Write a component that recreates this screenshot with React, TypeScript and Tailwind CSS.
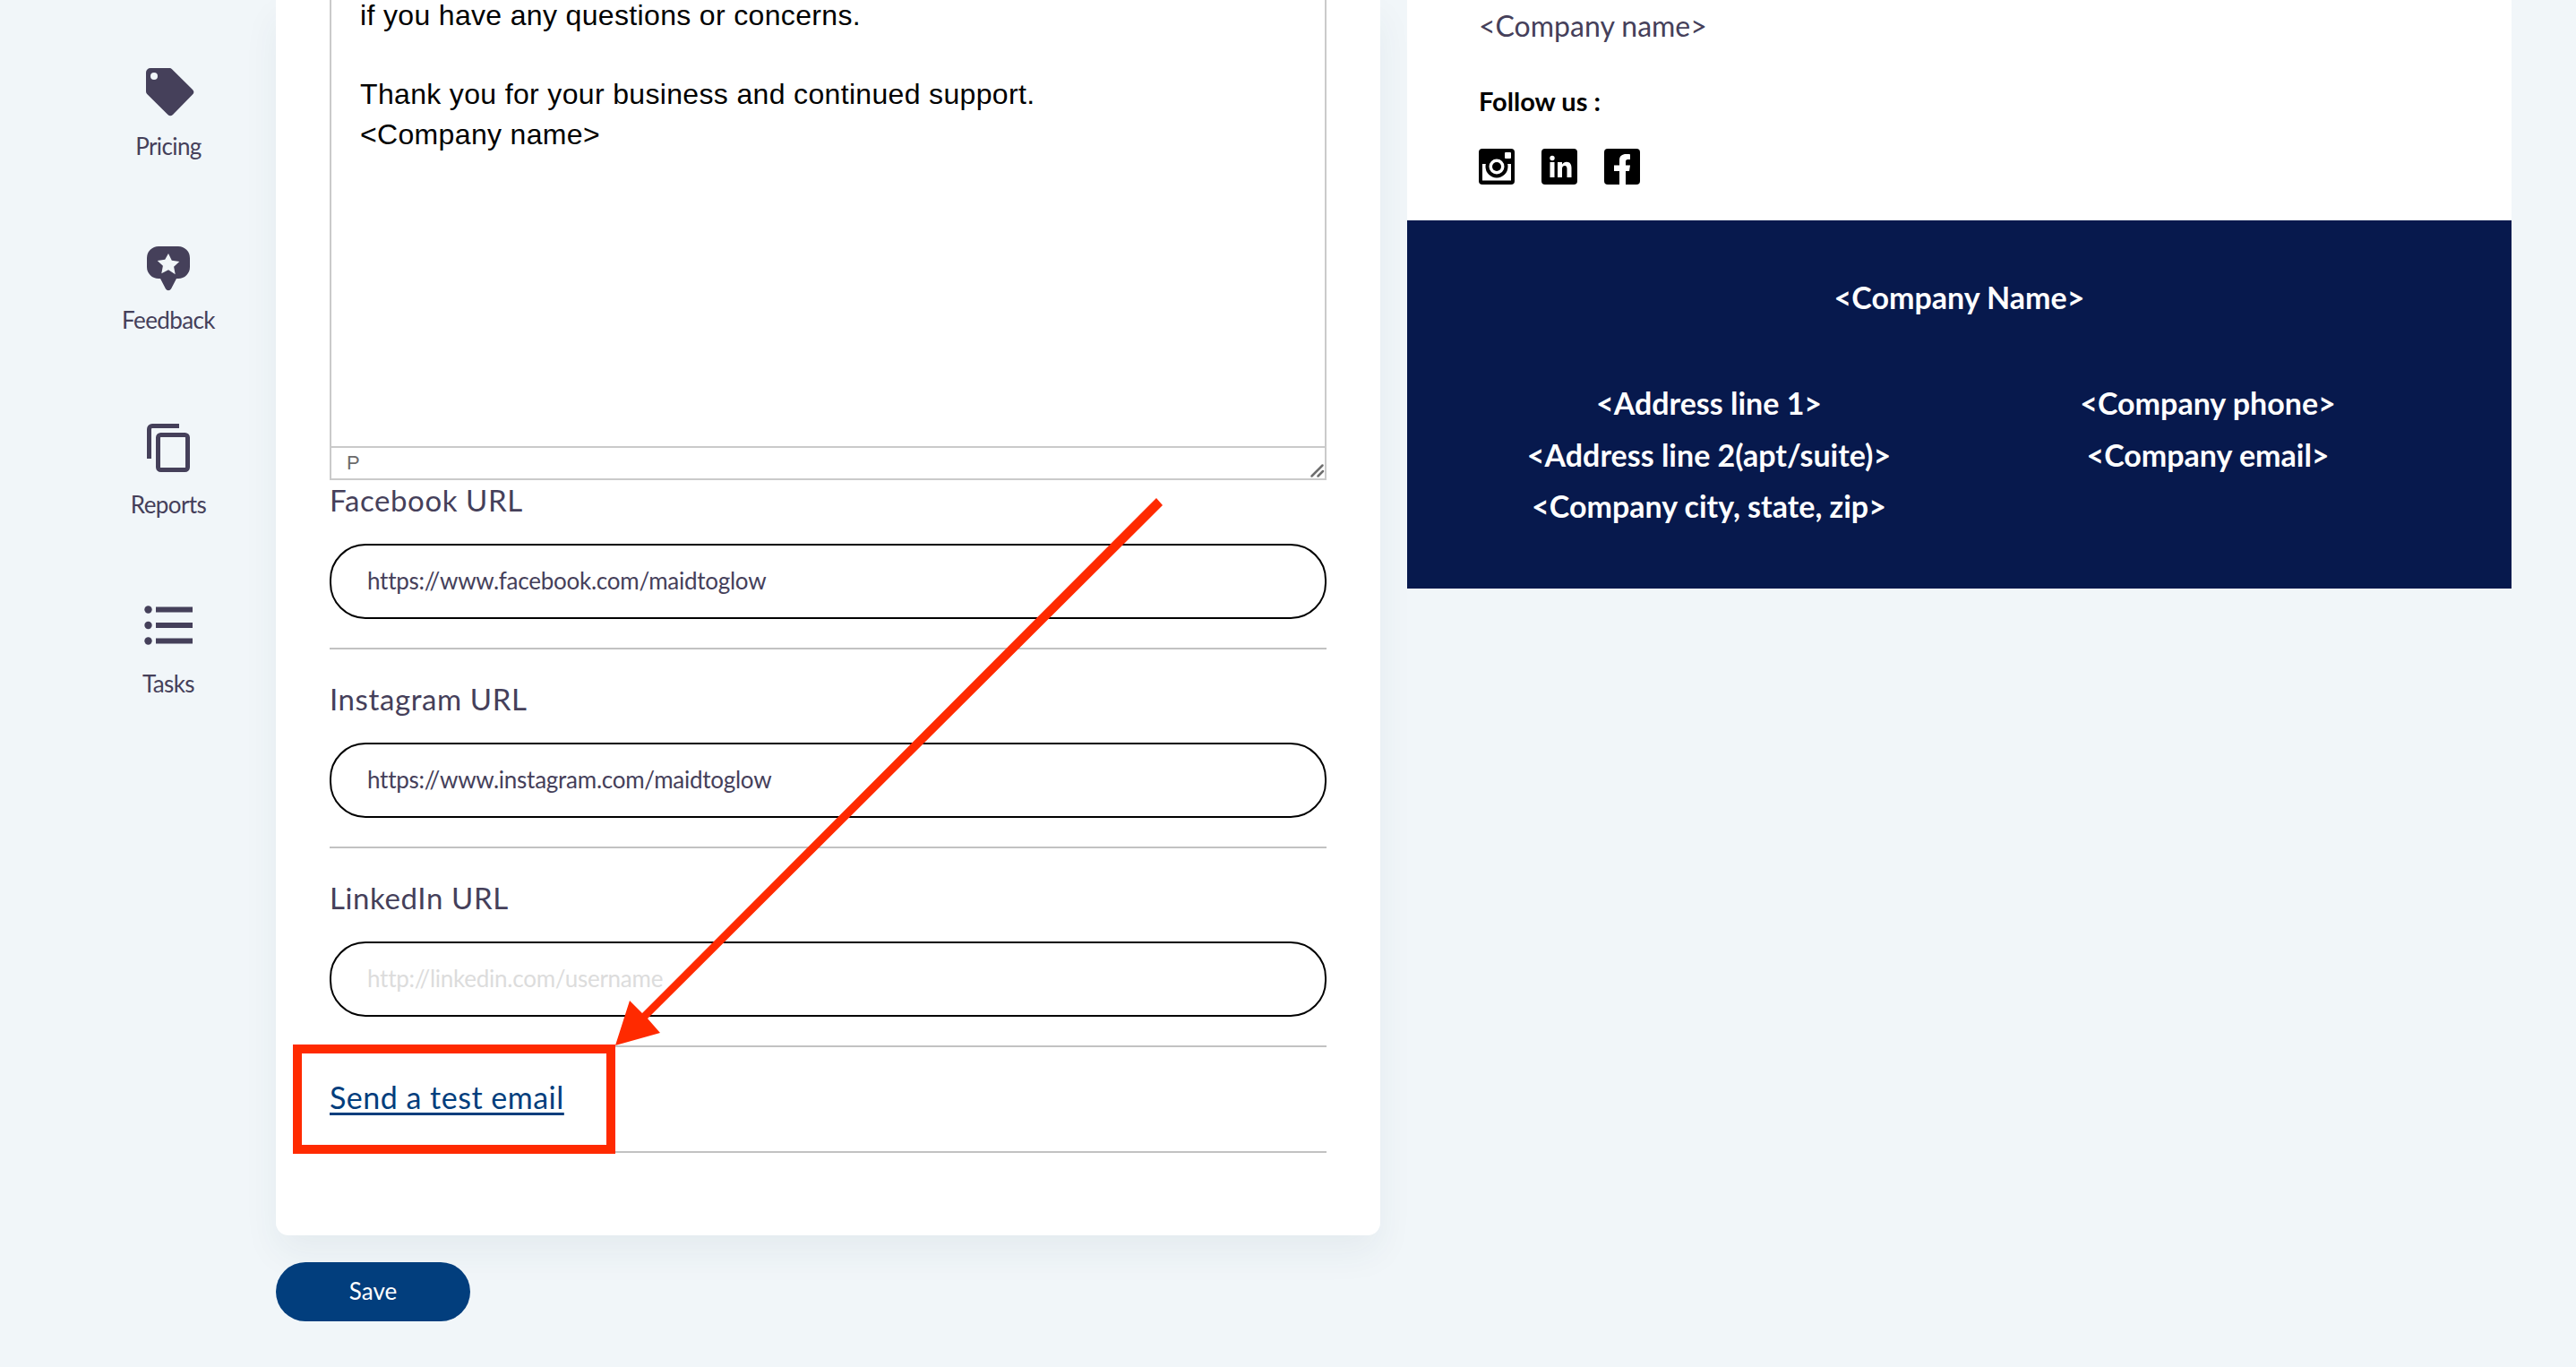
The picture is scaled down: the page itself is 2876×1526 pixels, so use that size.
const futura = "font-['Lato','Liberation_Sans',sans-serif]";

function NavItem({ icon, label, cls }: { icon: React.ReactNode; label: string; cls: string }) {
  return (
    <div className={`flex flex-col items-center ${cls}`}>
      {icon}
      <span className="text-[26px] leading-[34px] tracking-[-0.6px] text-[#45405a]">{label}</span>
    </div>
  );
}

function Field({ label, value, placeholder, first }: { label: string; value?: string; placeholder?: string; first?: boolean }) {
  return (
    <div className={`border-b-2 border-[#c2c2c2] ${first ? "pb-[32px]" : "pt-[33px] pb-[32px]"}`}>
      <label className="block text-[33px] leading-[44px] tracking-[0.6px] text-[#45405a] mb-[27px]">{label}</label>
      <div className="h-[84px] rounded-[40px] border-2 border-black flex items-center px-[40px] pb-[2px] text-[26px]">
        {value ? <span className="text-[#45405a] tracking-[-0.25px]">{value}</span> : <span className="text-[#dcdcdc] tracking-[-0.25px]">{placeholder}</span>}
      </div>
    </div>
  );
}

export default function App() {
  return (
    <div className={`relative h-[1526px] w-[2876px] overflow-hidden bg-[#f1f6f9] flex ${futura}`}>
      <aside className="w-[308px] shrink-0 pt-[76px]">
        <div className="w-[376px] flex flex-col items-center">
          <NavItem
            cls="h-[199px]"
            label="Pricing"
            icon={
              <svg width="54" height="54" viewBox="0 0 54 54" className="mb-[16px] ml-[3px]">
                <path d="M5 0H26a4 4 0 0 1 3 1.2L52 24a4 4 0 0 1 0 5.6L30 52a4 4 0 0 1-5.6 0L1.2 29A4 4 0 0 1 0 26V5a5 5 0 0 1 5-5Z" fill="#45405a" />
                <circle cx="9" cy="9" r="4" fill="#f1f6f9" />
              </svg>
            }
          />
          <NavItem
            cls="h-[198px]"
            label="Feedback"
            icon={
              <svg width="48" height="50" viewBox="0 0 48 50" className="mb-[15px]">
                <path d="M13 0H35a13 13 0 0 1 13 13V23a13 13 0 0 1-13 13H33L27 47.500a3.500 3.500 0 0 1-6 0L15 36H13A13 13 0 0 1 0 23V13A13 13 0 0 1 13 0Z" fill="#45405a" />
                <path d="M24 8l3.800 7.800 8.500 1.100-6.200 5.900 1.600 8.500L24 26.200l-7.700 4.100 1.600-8.500-6.200-5.900 8.500-1.100Z" fill="#f1f6f9" />
              </svg>
            }
          />
          <NavItem
            cls="h-[203px]"
            label="Reports"
            icon={
              <svg width="48" height="54" viewBox="0 0 48 54" className="mb-[19px]">
                <path d="M36 2.500H6A3.500 3.500 0 0 0 2.500 6V39" fill="none" stroke="#45405a" strokeWidth="5" />
                <rect x="12.500" y="12.500" width="33" height="39" rx="3" fill="none" stroke="#45405a" strokeWidth="5" />
              </svg>
            }
          />
          <NavItem
            cls="h-[120px]"
            label="Tasks"
            icon={
              <svg width="54" height="44" viewBox="0 0 54 44" className="mb-[26px]">
                <circle cx="4.500" cy="4.500" r="4.200" fill="#45405a" />
                <circle cx="4.500" cy="22" r="4.200" fill="#45405a" />
                <circle cx="4.500" cy="39.500" r="4.200" fill="#45405a" />
                <rect x="13" y="1.500" width="41" height="6" fill="#45405a" />
                <rect x="13" y="19" width="41" height="6" fill="#45405a" />
                <rect x="13" y="36.500" width="41" height="6" fill="#45405a" />
              </svg>
            }
          />
        </div>
      </aside>

      <main className="w-[1233px] shrink-0 self-start">
        <div className="h-[1379px] bg-white rounded-b-[14px] shadow-[0_20px_40px_rgba(40,60,90,0.06)] px-[60px]">
          <div className="h-[536px] border-2 border-t-0 border-[#cacaca] flex flex-col">
            <div className="flex-1 min-h-0 pl-[32px] pr-[33px] -mt-[5px] text-[32px] leading-[45px] tracking-[0.34px] text-black font-['Liberation_Sans',sans-serif]">
              <p>if you have any questions or concerns.</p>
              <p className="mt-[43px]">Thank you for your business and continued support.</p>
              <p>&lt;Company name&gt;</p>
            </div>
            <div className="relative h-[36px] border-t-2 border-[#cacaca] pl-[17px] text-[22px] leading-[34px] text-[#6b6b6b] font-['Liberation_Sans',sans-serif]">
              P
              <svg width="18" height="18" viewBox="0 0 18 18" className="absolute right-0 bottom-0">
                <path d="M15.500 3.500L3.500 15.500M16 10L10.500 15.500" stroke="#6f6f6f" strokeWidth="2.500" strokeLinecap="round" fill="none" />
              </svg>
            </div>
          </div>
          <Field first label="Facebook URL" value="https://www.facebook.com/maidtoglow" />
          <Field label="Instagram URL" value="https://www.instagram.com/maidtoglow" />
          <Field label="LinkedIn URL" placeholder="http://linkedin.com/username" />
          <div className="h-[118px] border-b-2 border-[#c2c2c2] flex items-center pb-[6px]">
            <a className="text-[34px] underline underline-offset-[4px] text-[#023e7d] tracking-[0.5px]">Send a test email</a>
          </div>
        </div>
        <button className="mt-[30px] w-[217px] h-[66px] rounded-[33px] bg-[#023e7d] text-white text-[26px] pb-[2px]">Save</button>
      </main>

      <section className="ml-[30px] w-[1233px] shrink-0 self-start">
        <div className="h-[246px] bg-white pl-[80px] overflow-hidden">
          <p className="text-[32px] leading-[40px] text-[#45405a] pt-[9px]">&lt;Company name&gt;</p>
          <p className="text-[29px] leading-[40px] font-bold text-black mt-[44px]">Follow us :</p>
          <div className="flex gap-[30px] mt-[33px]">
            <svg width="40" height="40" viewBox="0 0 40 40">
              <rect width="40" height="40" rx="4" fill="#000" />
              <rect x="4" y="17" width="32" height="18.500" fill="#fff" />
              <circle cx="20" cy="20" r="12.500" fill="#000" />
              <rect x="0" y="8" width="40" height="9" fill="#000" />
              <rect x="29" y="4" width="7" height="7" rx="1" fill="#fff" />
              <circle cx="20" cy="20" r="8.500" fill="#fff" />
              <circle cx="20" cy="20" r="5" fill="#000" />
            </svg>
            <svg width="40" height="40" viewBox="0 0 40 40">
              <rect width="40" height="40" rx="4" fill="#000" />
              <circle cx="12" cy="10.500" r="2.700" fill="#fff" />
              <rect x="9.500" y="15" width="5" height="17" fill="#fff" />
              <path d="M18 15H23V17.500C24 16 26 14.700 28 14.700C32 14.700 33.500 17.500 33.500 21.500V32H28.500V22.500C28.500 20.500 27.800 19 26 19C24 19 23 20.500 23 22.500V32H18Z" fill="#fff" />
            </svg>
            <svg width="40" height="40" viewBox="0 0 40 40">
              <rect width="40" height="40" rx="4" fill="#000" />
              <path d="M17 40V25H11V18.500H17V13C17 8 20 6 24.500 6C26.500 6 29 6.200 29 6.200V12H26.500C24.500 12 24 13 24 14.500V18.500H29L28 25H24V40Z" fill="#fff" />
            </svg>
          </div>
        </div>
        <div className="h-[411px] bg-[#07194d] text-white font-bold text-[34px] text-center">
          <p className="pt-[66px] leading-[40px]">&lt;Company Name&gt;</p>
          <div className="flex mt-[69px] pl-[80px] leading-[57.5px]">
            <div className="w-[514px]">
              <p>&lt;Address line 1&gt;</p>
              <p>&lt;Address line 2(apt/suite)&gt;</p>
              <p>&lt;Company city, state, zip&gt;</p>
            </div>
            <div className="w-[600px]">
              <p>&lt;Company phone&gt;</p>
              <p>&lt;Company email&gt;</p>
            </div>
          </div>
        </div>
      </section>

      <div className="absolute left-[327px] top-[1166px] w-[360px] h-[122px] border-[10px] border-[#ff2a00]" />
      <svg className="absolute left-0 top-0 pointer-events-none" width="2876" height="1526" viewBox="0 0 2876 1526">
        <path d="M1291 556L1298 564L723 1137L737 1153L687 1167L703 1117L717 1131Z" fill="#ff2a00" />
      </svg>
    </div>
  );
}
